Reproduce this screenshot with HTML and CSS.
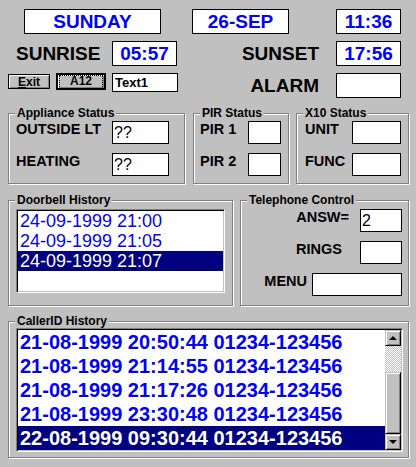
FILE: index.html
```html
<!DOCTYPE html>
<html lang="en">

<head>
   <meta charset="UTF-8">
   <meta name="viewport" content="width=device-width, initial-scale=1.0">
   <title>Home Control</title>
   <link rel="stylesheet" href="styles.css">
</head>

<body>
   <div class="panel">
      <!-- date and time -->
      <div class="row row-date">
         <div class="field big day">SUNDAY</div>
         <div class="field big month">26-SEP</div>
         <div class="field big clock">11:36</div>
      </div>

      <div class="row row-sun">
         <span class="big-label sunrise">SUNRISE</span>
         <div class="field big time">05:57</div>
         <span class="big-label sunset">SUNSET</span>
         <div class="field big time">17:56</div>
      </div>

      <div class="row row-alarm">
         <button class="btn exit"><u>E</u>xit</button>
         <button class="btn btn-default a12"><span class="focus">A12</span></button>
         <div class="field text1">Text1</div>
         <span class="big-label alarm">ALARM</span>
         <div class="field big time"></div>
      </div>

      <!-- status groups -->
      <div class="row row-status">
         <fieldset class="group appliance">
            <legend>Appliance Status</legend>
            <div class="line"><span class="label">OUTSIDE LT</span><div class="field value">??</div></div>
            <div class="line"><span class="label">HEATING</span><div class="field value">??</div></div>
         </fieldset>
         <fieldset class="group pir">
            <legend>PIR Status</legend>
            <div class="line"><span class="label">PIR 1</span><div class="field value"></div></div>
            <div class="line"><span class="label">PIR 2</span><div class="field value"></div></div>
         </fieldset>
         <fieldset class="group x10">
            <legend>X10 Status</legend>
            <div class="line"><span class="label">UNIT</span><div class="field value"></div></div>
            <div class="line"><span class="label">FUNC</span><div class="field value"></div></div>
         </fieldset>
      </div>

      <div class="row row-middle">
         <fieldset class="group doorbell">
            <legend>Doorbell History</legend>
            <div class="list doorbell-list">
               <div class="items">
                  <div class="item">24-09-1999 21:00</div>
                  <div class="item">24-09-1999 21:05</div>
                  <div class="item selected">24-09-1999 21:07</div>
               </div>
            </div>
         </fieldset>
         <fieldset class="group phone">
            <legend>Telephone Control</legend>
            <div class="line"><span class="label answ">ANSW=</span><div class="field value">2</div></div>
            <div class="line"><span class="label rings">RINGS</span><div class="field value"></div></div>
            <div class="line"><span class="label menu">MENU</span><div class="field value wide"></div></div>
         </fieldset>
      </div>

      <div class="row row-caller">
         <fieldset class="group caller">
            <legend>CallerID History</legend>
            <div class="list caller-list">
               <div class="items">
                  <div class="item">21-08-1999 20:50:44 01234-123456</div>
                  <div class="item">21-08-1999 21:14:55 01234-123456</div>
                  <div class="item">21-08-1999 21:17:26 01234-123456</div>
                  <div class="item">21-08-1999 23:30:48 01234-123456</div>
                  <div class="item selected">22-08-1999 09:30:44 01234-123456</div>
               </div>
               <div class="scrollbar">
                  <div class="sb-btn"><span class="arrow up"></span></div>
                  <div class="sb-track"></div>
                  <div class="sb-thumb"></div>
                  <div class="sb-btn"><span class="arrow down"></span></div>
               </div>
            </div>
         </fieldset>
      </div>
   </div>
</body>
</html>
```

FILE: styles.css
```css
html {
   background-color: #c0c0c0;
}

body {
   margin: 0;
   width: 416px;
   height: 467px;
   overflow: hidden;
   background-color: #c0c0c0;
   font-family: "Liberation Sans", Arial, sans-serif;
   color: #000;
}

.panel {
   padding-top: 9px;
}

.row {
   display: flex;
}

/* white boxes */
.field {
   box-sizing: border-box;
   background-color: #fff;
   border: 1px solid #000;
}

.big {
   height: 25px;
   font-size: 19px;
   font-weight: bold;
   line-height: 23px;
   color: #0000ff;
   text-align: center;
}

.day {
   margin-left: 24px;
   width: 137px;
}

.month {
   margin-left: 31px;
   width: 97px;
}

.clock {
   margin-left: 47px;
   width: 65px;
}

.time {
   width: 65px;
}

.big-label {
   font-size: 19px;
   font-weight: bold;
   line-height: 25px;
}

.row-sun {
   margin-top: 7px;
   align-items: center;
}

.sunrise {
   margin-left: 16px;
   width: 96px;
}

.sunset,
.alarm {
   margin-left: auto;
   margin-right: 17px;
}

.row-sun .time:last-child,
.row-alarm .time {
   margin-right: 15px;
}

.row-alarm {
   margin-top: 7px;
   align-items: flex-start;
}

/* buttons */
.btn {
   box-sizing: border-box;
   height: 15px;
   margin-top: 1px;
   padding: 0;
   font-family: "Liberation Sans", Arial, sans-serif;
   font-size: 12px;
   font-weight: bold;
   line-height: 12px;
   color: #000;
   background-color: #c0c0c0;
   border: 1px solid #000;
   box-shadow: inset 1px 1px 0 #fff, inset -1px -1px 0 #808080;
}

.exit {
   margin-left: 8px;
   width: 42px;
}

.btn-default {
   height: 17px;
   margin-top: 0;
   border-width: 2px;
   display: flex;
   padding: 0 1px;
}

.a12 {
   margin-left: 6px;
   width: 50px;
}

.focus {
   flex: 1;
   margin-top: 0;
   height: 12px;
   border: 1px dotted #000;
   line-height: 11px;
}

.text1 {
   margin-left: 6px;
   width: 66px;
   height: 19px;
   padding-left: 2px;
   font-size: 13px;
   font-weight: bold;
   line-height: 17px;
}

/* group frames */
.group {
   box-sizing: border-box;
   margin: 0;
   padding: 1px 0 0;
   min-width: 0;
   border: 1px solid #808080;
   box-shadow: inset 1px 1px 0 #fff, 1px 1px 0 #fff;
}

.group legend {
   margin-left: 6px;
   padding: 0 2px;
   font-size: 12px;
   font-weight: bold;
   line-height: 14px;
   background-color: #c0c0c0;
}

.line {
   display: flex;
   align-items: flex-start;
   margin-bottom: 9px;
}

.label {
   font-size: 14.5px;
   font-weight: bold;
   line-height: 17px;
}

.value {
   height: 23px;
   padding-left: 1px;
   font-size: 16px;
   line-height: 21px;
}

.row-status {
   margin-top: 8px;
}

.appliance {
   margin-left: 8px;
   width: 177px;
   height: 78px;
}

.appliance .line {
   margin-left: 7px;
}

.appliance .label {
   width: 96px;
}

.appliance .value {
   width: 57px;
}

.pir {
   margin-left: 8px;
   width: 96px;
   height: 78px;
}

.pir .line {
   margin-left: 6px;
}

.pir .label {
   width: 48px;
}

.pir .value {
   width: 33px;
}

.x10 {
   margin-left: 7px;
   width: 113px;
   height: 78px;
}

.x10 .line {
   margin-left: 8px;
}

.x10 .label {
   width: 47px;
}

.x10 .value {
   width: 49px;
}

.row-middle {
   margin-top: 9px;
}

.doorbell {
   margin-left: 8px;
   width: 225px;
   height: 113px;
   padding-top: 2px;
}

.phone {
   margin-left: 7px;
   width: 169px;
   height: 113px;
   padding: 2px 6px 0 0;
}

.phone .line {
   justify-content: flex-end;
}

.phone .value {
   width: 42px;
}

.phone .value.wide {
   width: 90px;
}

.answ {
   margin-right: 11px;
}

.rings {
   margin-right: 18px;
}

.menu {
   margin-right: 5px;
}

/* list boxes */
.list {
   box-sizing: border-box;
   display: flex;
   background-color: #fff;
   border: 1px solid;
   border-color: #808080 #fff #fff #808080;
   box-shadow: inset 1px 1px 0 #000, inset -1px -1px 0 #c0c0c0;
   padding: 1px;
}

.items {
   flex: 1;
}

.item {
   padding-left: 2px;
   white-space: pre;
   color: #0000ff;
}

.item.selected {
   background-color: #000080;
   color: #fff;
}

.doorbell-list {
   margin-left: 7px;
   width: 209px;
   height: 84px;
}

.doorbell-list .item {
   height: 20px;
   font-size: 18px;
   line-height: 20px;
}

.row-caller {
   margin-top: 8px;
}

.caller {
   margin-left: 8px;
   width: 401px;
   height: 144px;
   padding-top: 0;
}

.caller-list {
   margin-left: 7px;
   width: 387px;
   height: 124px;
}

.caller-list .item {
   height: 24px;
   font-size: 20px;
   font-weight: bold;
   line-height: 24px;
   overflow: hidden;
}

/* scrollbar */
.scrollbar {
   width: 16px;
   display: flex;
   flex-direction: column;
}

.sb-btn,
.sb-thumb {
   box-sizing: border-box;
   background-color: #c0c0c0;
   border: 1px solid;
   border-color: #c0c0c0 #000 #000 #c0c0c0;
   box-shadow: inset 1px 1px 0 #fff, inset -1px -1px 0 #808080;
}

.sb-btn {
   height: 16px;
   display: flex;
   align-items: center;
   justify-content: center;
}

.sb-track {
   height: 26px;
   background-color: #c0c0c0;
   background-image: repeating-conic-gradient(#fff 0 25%, #c0c0c0 0 50%);
   background-size: 2px 2px;
}

.sb-thumb {
   height: 62px;
}

.arrow {
   width: 0;
   height: 0;
   border-left: 4px solid transparent;
   border-right: 4px solid transparent;
}

.arrow.up {
   border-bottom: 4px solid #000;
}

.arrow.down {
   border-top: 4px solid #000;
}
```
